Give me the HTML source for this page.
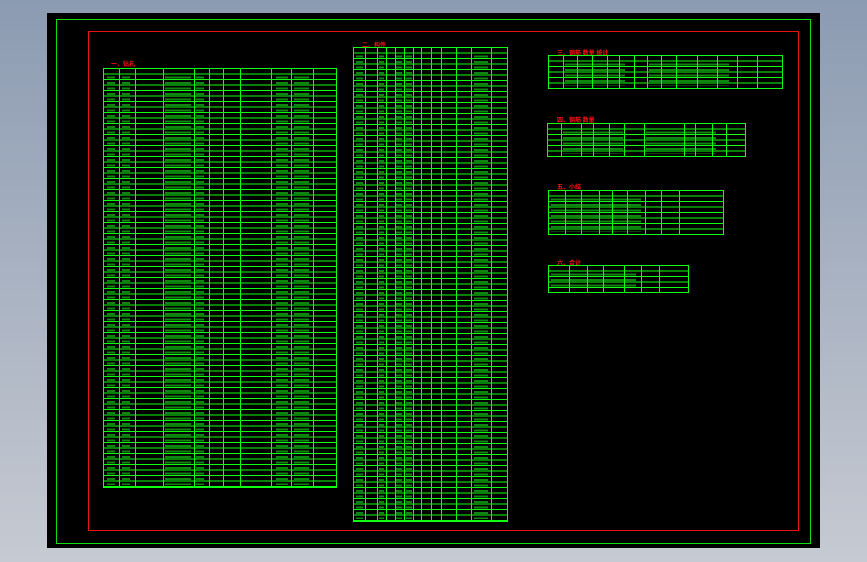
<!DOCTYPE html>
<html><head><meta charset="utf-8"><style>
html,body{margin:0;padding:0}
body{width:867px;height:562px;position:relative;overflow:hidden;background:linear-gradient(#8c9bb2,#c6cad2);font-family:"Liberation Sans","Noto Sans CJK SC",sans-serif}
.a{position:absolute;box-sizing:border-box}
.t{border:1px solid #1f1;background-image:repeating-linear-gradient(to bottom,transparent 0 4.5px,#1f1 4.5px 5.5px)}
.v{position:absolute;top:0;bottom:0;width:1px;background:#1f1}
.f{position:absolute;top:6px;bottom:2px;background-image:repeating-linear-gradient(to bottom,transparent 0 1.5px,rgba(30,240,30,.55) 1.5px 3.5px,transparent 3.5px 5.5px)}
.r{color:#f11;font-size:6px;font-weight:bold;position:absolute;white-space:nowrap}
.tx{position:absolute;color:#1f1;font-size:4px;line-height:5.5px;white-space:pre;font-family:"Liberation Mono",monospace}
</style></head><body>
<div class="a" style="left:47px;top:13px;width:773px;height:535px;background:#000"></div>
<div class="a" style="left:56px;top:19px;width:755px;height:525px;border:1px solid #1d1"></div>
<div class="a" style="left:88px;top:31px;width:711px;height:500px;border:1px solid #e11"></div>

<div class="r" style="left:111px;top:59px">一、钻孔</div>
<div class="a t" style="left:103px;top:68px;width:234px;height:420px">
<div class="f" style="left:3px;width:8px"></div><div class="f" style="left:18px;width:8px"></div><div class="f" style="left:61px;width:26px"></div><div class="f" style="left:92px;width:8px"></div><div class="f" style="left:172px;width:12px"></div><div class="f" style="left:190px;width:15px"></div>
<div class="v" style="left:15px"></div><div class="v" style="left:31px"></div><div class="v" style="left:59px"></div><div class="v" style="left:90px"></div><div class="v" style="left:105px"></div><div class="v" style="left:119px"></div><div class="v" style="left:136px"></div><div class="v" style="left:167px"></div><div class="v" style="left:187px"></div><div class="v" style="left:209px"></div>
</div>

<div class="r" style="left:362px;top:40px">二、构件</div>
<div class="a t" style="left:353px;top:47px;width:155px;height:475px">
<div class="f" style="left:2px;width:7px"></div><div class="f" style="left:25px;width:5px"></div><div class="f" style="left:42px;width:6px"></div><div class="f" style="left:52px;width:6px"></div><div class="f" style="left:120px;width:14px"></div>
<div class="v" style="left:11px"></div><div class="v" style="left:23px"></div><div class="v" style="left:32px"></div><div class="v" style="left:41px"></div><div class="v" style="left:50px"></div><div class="v" style="left:59px"></div><div class="v" style="left:67px"></div><div class="v" style="left:77px"></div><div class="v" style="left:87px"></div><div class="v" style="left:102px"></div><div class="v" style="left:117px"></div><div class="v" style="left:137px"></div>
</div>

<div class="r" style="left:557px;top:48px">三、钢筋 数量 统计</div>
<div class="a t" style="left:548px;top:55px;width:235px;height:34px">
<div class="f" style="left:16px;width:60px"></div><div class="f" style="left:100px;width:80px"></div>
<div class="v" style="left:14px"></div><div class="v" style="left:28px"></div><div class="v" style="left:43px"></div><div class="v" style="left:58px"></div><div class="v" style="left:70px"></div><div class="v" style="left:85px"></div><div class="v" style="left:98px"></div><div class="v" style="left:112px"></div><div class="v" style="left:127px"></div><div class="v" style="left:148px"></div><div class="v" style="left:168px"></div><div class="v" style="left:188px"></div><div class="v" style="left:208px"></div>
</div>

<div class="r" style="left:557px;top:115px">四、钢筋 数量</div>
<div class="a t" style="left:547px;top:123px;width:199px;height:34px">
<div class="f" style="left:15px;width:60px"></div><div class="f" style="left:98px;width:70px"></div>
<div class="v" style="left:13px"></div><div class="v" style="left:33px"></div><div class="v" style="left:45px"></div><div class="v" style="left:61px"></div><div class="v" style="left:76px"></div><div class="v" style="left:96px"></div><div class="v" style="left:136px"></div><div class="v" style="left:147px"></div><div class="v" style="left:164px"></div><div class="v" style="left:178px"></div>
</div>

<div class="r" style="left:557px;top:182px">五、小结</div>
<div class="a t" style="left:548px;top:190px;width:176px;height:45px">
<div class="f" style="left:2px;width:90px"></div>
<div class="v" style="left:16px"></div><div class="v" style="left:32px"></div><div class="v" style="left:50px"></div><div class="v" style="left:63px"></div><div class="v" style="left:78px"></div><div class="v" style="left:96px"></div><div class="v" style="left:112px"></div><div class="v" style="left:130px"></div>
</div>

<div class="r" style="left:557px;top:258px">六、合计</div>
<div class="a t" style="left:548px;top:265px;width:141px;height:28px">
<div class="f" style="left:2px;width:85px"></div>
<div class="v" style="left:20px"></div><div class="v" style="left:38px"></div><div class="v" style="left:54px"></div><div class="v" style="left:75px"></div><div class="v" style="left:92px"></div><div class="v" style="left:110px"></div>
</div>
</body></html>
